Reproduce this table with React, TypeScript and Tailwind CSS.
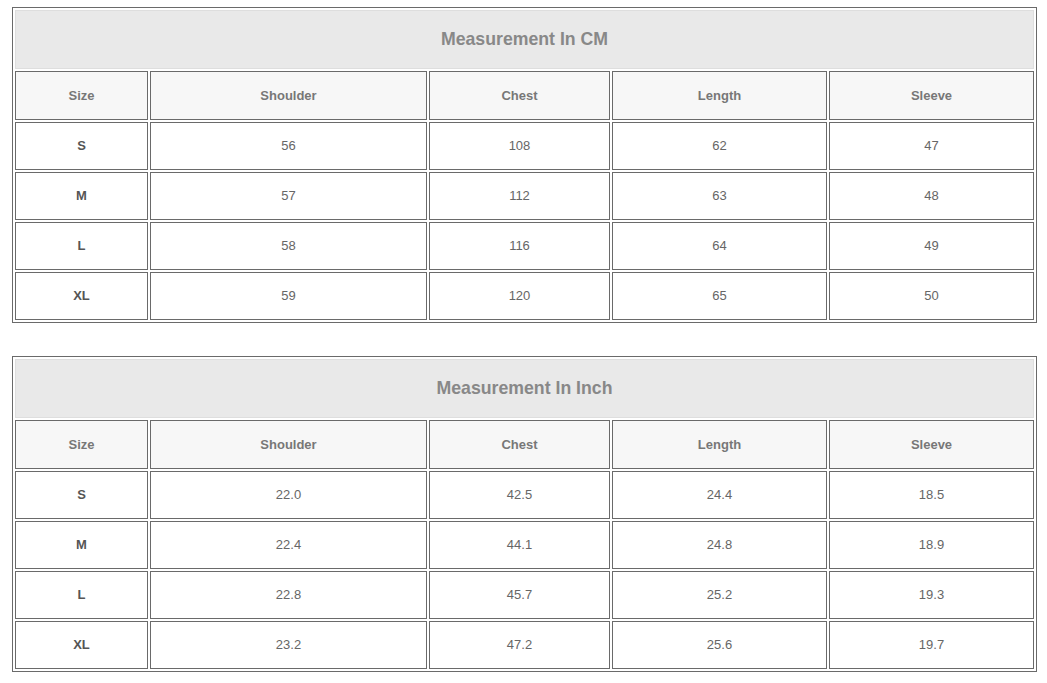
const COLS = ["Size", "Shoulder", "Chest", "Length", "Sleeve"];

const CM = [
  ["S", "56", "108", "62", "47"],
  ["M", "57", "112", "63", "48"],
  ["L", "58", "116", "64", "49"],
  ["XL", "59", "120", "65", "50"],
];

const INCH = [
  ["S", "22.0", "42.5", "24.4", "18.5"],
  ["M", "22.4", "44.1", "24.8", "18.9"],
  ["L", "22.8", "45.7", "25.2", "19.3"],
  ["XL", "23.2", "47.2", "25.6", "19.7"],
];

function SizeTable({ title, rows }: { title: string; rows: string[][] }) {
  return (
    <div className="w-[1025px] border border-[#6a6a6a] p-[2px]">
      <div className="grid grid-cols-[133px_277px_181px_215px_205px] gap-[2px]">
        <div className="col-span-5 flex h-[59px] items-center justify-center border border-[#dedede] bg-[#e9e9e9] text-[17.7px] font-bold text-[#888]">
          {title}
        </div>
        {COLS.map((c) => (
          <div
            key={c}
            className="flex h-[49px] items-center justify-center border border-[#6a6a6a] bg-[#f7f7f7] text-[13px] font-bold text-[#777]"
          >
            {c}
          </div>
        ))}
        {rows.map((r) =>
          r.map((v, i) => (
            <div
              key={r[0] + i}
              className={`flex h-[48px] items-center justify-center border border-[#6a6a6a] bg-white text-[13px] ${
                i === 0 ? "font-bold text-[#555]" : "text-[#666]"
              }`}
            >
              {v}
            </div>
          ))
        )}
      </div>
    </div>
  );
}

export default function App() {
  return (
    <div className="min-h-[683px] bg-white pl-[12px] pt-[7px] font-['Liberation_Sans',Arial,sans-serif]">
      <SizeTable title="Measurement In CM" rows={CM} />
      <div className="h-[33px]" />
      <SizeTable title="Measurement In Inch" rows={INCH} />
    </div>
  );
}
